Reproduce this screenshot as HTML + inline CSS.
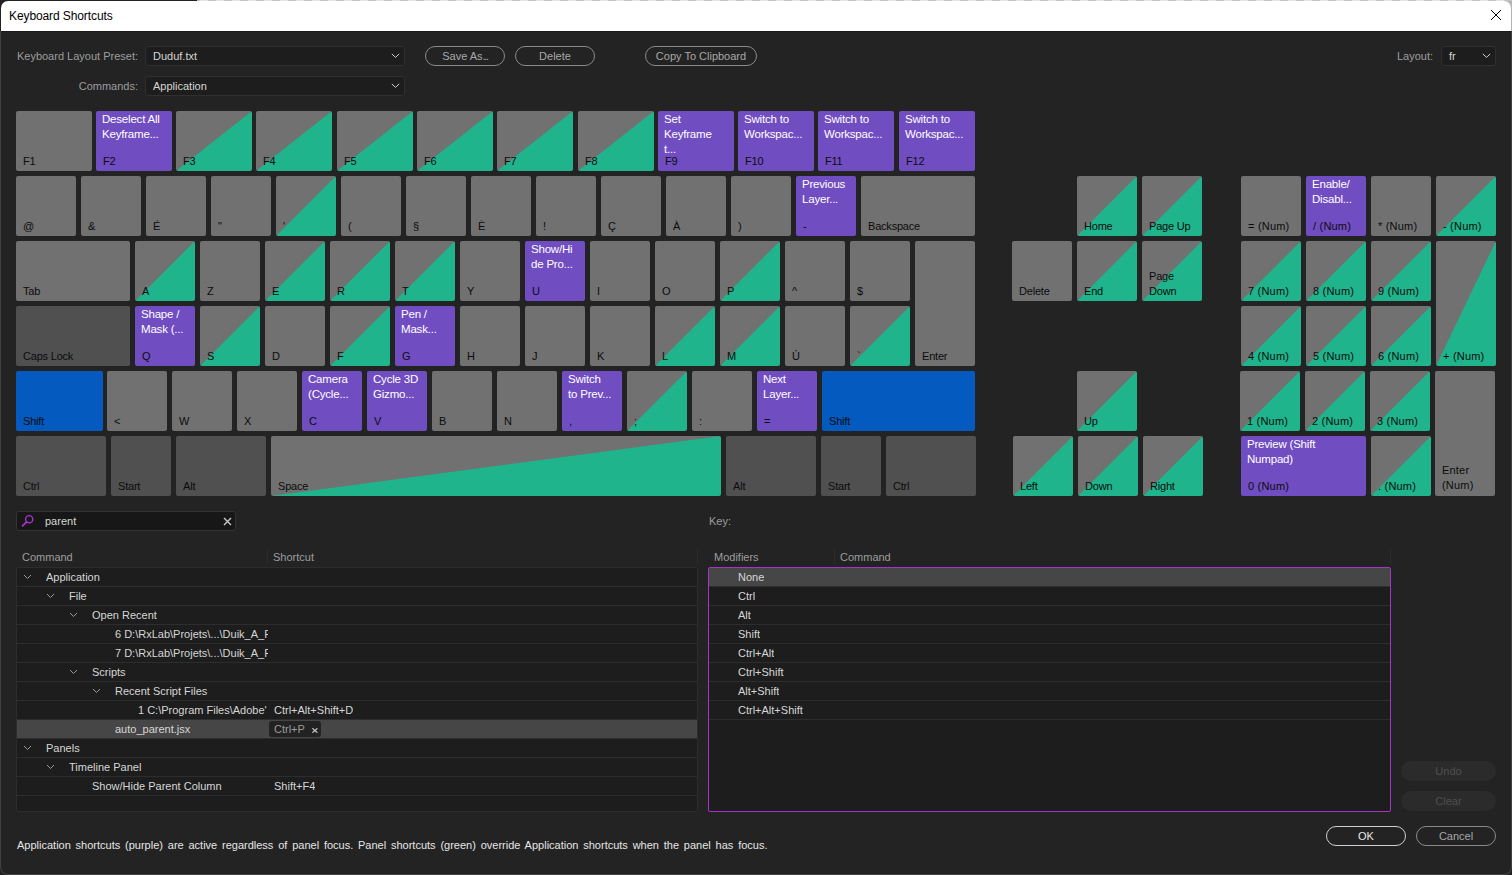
<!DOCTYPE html>
<html><head><meta charset="utf-8"><title>Keyboard Shortcuts</title>
<style>
*{box-sizing:border-box;margin:0;padding:0}
html,body{width:1512px;height:875px;overflow:hidden;background:#232323}
body{position:relative;font-family:"Liberation Sans",sans-serif;font-size:11px;letter-spacing:0;color:#d6d6d6;line-height:15px}
#win{position:absolute;left:0;top:0;width:1512px;height:875px;background:#232323;overflow:hidden}
#title{position:absolute;left:1px;top:1px;width:1510px;height:30px;background:#fff;border-radius:7px 7px 0 0;color:#000;letter-spacing:-0.1px;font-size:12px}
#title span{position:absolute;left:8px;top:8px;line-height:15px}
#edge-t{position:absolute;left:0;top:0;width:1512px;height:1px;background:linear-gradient(to right,#222 0,#222 197px,transparent 197px),repeating-linear-gradient(to right,#c4c4c4 0,#c4c4c4 8px,#e4e4e4 8px,#e4e4e4 16px)}
#frame{position:absolute;left:0;top:31px;width:1512px;height:844px;border:1px solid #414141;border-top:none;border-radius:0 0 8px 8px}
.lbl{position:absolute;color:#9d9d9d;white-space:nowrap}
.dd{position:absolute;height:20px;background:#1d1d1d;border:1px solid #303030;border-radius:3px;color:#d6d6d6}
.dd span{position:absolute;left:7px;top:2px;white-space:nowrap}
.dd svg{position:absolute;right:4px;top:6px}
.btn{position:absolute;height:20px;border:1px solid #8a8a8a;border-radius:10px;color:#a8a8a8;text-align:center;line-height:19px;white-space:nowrap}
.btn.dis{border:none;background:#2b2b2b;color:#4f4f4f;line-height:21px}
.btn.ok{border-color:#d0d0d0;color:#e8e8e8;border-width:1.5px;line-height:18px}
.k{position:absolute;border-radius:2px;background:#717171;overflow:hidden}
.k.p{background:#714dc2}
.k.b{background:#045abf}
.k.d{background:#505050}
.k.g{background:linear-gradient(to bottom right,#717171 49.6%,#1fb48b 50.4%)}
.k .l{position:absolute;left:7px;bottom:2px;color:#0c0c0c;white-space:nowrap;line-height:15px;font-size:11px;letter-spacing:-0.2px}
.k .l.n{letter-spacing:0.2px}
.k .c{position:absolute;left:6px;top:1px;color:#fff;white-space:nowrap;line-height:15px;font-size:11.5px;letter-spacing:-0.2px}
#search{position:absolute;left:16px;top:511px;width:220px;height:20px;background:#171717;border:1px solid #333;border-radius:3px}
#search span{position:absolute;left:28px;top:2px;color:#d6d6d6}
.tbl{position:absolute;background:#1d1d1d;overflow:hidden;border-radius:2px}
.row{position:absolute;left:0;width:100%;height:19px;border-bottom:1px solid #2d2d2d}
.row.sel{background:#464646}
.row span{position:absolute;top:2px;white-space:nowrap;overflow:hidden}
.row .nm{color:#d6d6d6}
.row .sc{left:257px;color:#d6d6d6}
.row .chv{top:0;height:19px;width:12px;overflow:visible}
.row .chv svg{position:absolute;left:0;top:6px}
.row .chip{left:252px;top:1px;width:52px;height:16px;background:#222;border-radius:3px;color:#9c9c9c;padding:1px 0 0 5px;overflow:visible}
.hdr{position:absolute;color:#9d9d9d;white-space:nowrap}
.vdiv{position:absolute;width:1px;background:#2c2c2c}
</style></head><body>
<div id="win">
<div style="position:absolute;left:1500px;top:1px;width:12px;height:30px;background:#b4b4b4"></div>
<div id="title"><span>Keyboard Shortcuts</span>
<svg width="12" height="12" viewBox="0 0 12 12" style="position:absolute;left:1489px;top:8px"><path d="M1 1L11 11M11 1L1 11" stroke="#000" stroke-width="1" fill="none"/></svg>
</div>
<div id="edge-t"></div>

<div class="lbl" style="right:1374px;top:49px">Keyboard Layout Preset:</div>
<div class="dd" style="left:145px;top:46px;width:260px"><span>Duduf.txt</span><svg width="9" height="6" viewBox="0 0 9 6"><path d="M0.8 0.9L4.5 4.4L8.2 0.9" fill="none" stroke="#cfcfcf" stroke-width="1"/></svg></div>
<div class="lbl" style="right:1374px;top:79px">Commands:</div>
<div class="dd" style="left:145px;top:76px;width:260px"><span>Application</span><svg width="9" height="6" viewBox="0 0 9 6"><path d="M0.8 0.9L4.5 4.4L8.2 0.9" fill="none" stroke="#cfcfcf" stroke-width="1"/></svg></div>
<div class="btn" style="left:425px;top:46px;width:80px">Save As<span style="letter-spacing:-1.3px">...</span></div>
<div class="btn" style="left:515px;top:46px;width:80px">Delete</div>
<div class="btn" style="left:645px;top:46px;width:112px">Copy To Clipboard</div>
<div class="lbl" style="left:1397px;top:49px">Layout:</div>
<div class="dd" style="left:1441px;top:46px;width:55px"><span>fr</span><svg width="9" height="6" viewBox="0 0 9 6"><path d="M0.8 0.9L4.5 4.4L8.2 0.9" fill="none" stroke="#cfcfcf" stroke-width="1"/></svg></div>

<div class="k " style="left:16px;top:111px;width:76px;height:60px"><span class="l">F1</span></div>
<div class="k p" style="left:96px;top:111px;width:76px;height:60px"><span class="c">Deselect All<br>Keyframe...</span><span class="l">F2</span></div>
<div class="k g" style="left:176px;top:111px;width:76px;height:60px"><span class="l">F3</span></div>
<div class="k g" style="left:256px;top:111px;width:76px;height:60px"><span class="l">F4</span></div>
<div class="k g" style="left:337px;top:111px;width:76px;height:60px"><span class="l">F5</span></div>
<div class="k g" style="left:417px;top:111px;width:76px;height:60px"><span class="l">F6</span></div>
<div class="k g" style="left:497px;top:111px;width:76px;height:60px"><span class="l">F7</span></div>
<div class="k g" style="left:578px;top:111px;width:76px;height:60px"><span class="l">F8</span></div>
<div class="k p" style="left:658px;top:111px;width:76px;height:60px"><span class="c">Set<br>Keyframe<br>t...</span><span class="l">F9</span></div>
<div class="k p" style="left:738px;top:111px;width:76px;height:60px"><span class="c">Switch to<br>Workspac...</span><span class="l">F10</span></div>
<div class="k p" style="left:818px;top:111px;width:76px;height:60px"><span class="c">Switch to<br>Workspac...</span><span class="l">F11</span></div>
<div class="k p" style="left:899px;top:111px;width:76px;height:60px"><span class="c">Switch to<br>Workspac...</span><span class="l">F12</span></div>
<div class="k " style="left:16px;top:176px;width:60px;height:60px"><span class="l">@</span></div>
<div class="k " style="left:81px;top:176px;width:60px;height:60px"><span class="l">&amp;</span></div>
<div class="k " style="left:146px;top:176px;width:60px;height:60px"><span class="l">É</span></div>
<div class="k " style="left:211px;top:176px;width:60px;height:60px"><span class="l">"</span></div>
<div class="k g" style="left:276px;top:176px;width:60px;height:60px"><span class="l">'</span></div>
<div class="k " style="left:341px;top:176px;width:60px;height:60px"><span class="l">(</span></div>
<div class="k " style="left:406px;top:176px;width:60px;height:60px"><span class="l">§</span></div>
<div class="k " style="left:471px;top:176px;width:60px;height:60px"><span class="l">È</span></div>
<div class="k " style="left:536px;top:176px;width:60px;height:60px"><span class="l">!</span></div>
<div class="k " style="left:601px;top:176px;width:60px;height:60px"><span class="l">Ç</span></div>
<div class="k " style="left:666px;top:176px;width:60px;height:60px"><span class="l">À</span></div>
<div class="k " style="left:731px;top:176px;width:60px;height:60px"><span class="l">)</span></div>
<div class="k p" style="left:796px;top:176px;width:60px;height:60px"><span class="c">Previous<br>Layer...</span><span class="l">-</span></div>
<div class="k " style="left:861px;top:176px;width:114px;height:60px"><span class="l">Backspace</span></div>
<div class="k " style="left:16px;top:241px;width:114px;height:60px"><span class="l">Tab</span></div>
<div class="k g" style="left:135px;top:241px;width:60px;height:60px"><span class="l">A</span></div>
<div class="k " style="left:200px;top:241px;width:60px;height:60px"><span class="l">Z</span></div>
<div class="k g" style="left:265px;top:241px;width:60px;height:60px"><span class="l">E</span></div>
<div class="k g" style="left:330px;top:241px;width:60px;height:60px"><span class="l">R</span></div>
<div class="k g" style="left:395px;top:241px;width:60px;height:60px"><span class="l">T</span></div>
<div class="k " style="left:460px;top:241px;width:60px;height:60px"><span class="l">Y</span></div>
<div class="k p" style="left:525px;top:241px;width:60px;height:60px"><span class="c">Show/Hi<br>de Pro...</span><span class="l">U</span></div>
<div class="k " style="left:590px;top:241px;width:60px;height:60px"><span class="l">I</span></div>
<div class="k " style="left:655px;top:241px;width:60px;height:60px"><span class="l">O</span></div>
<div class="k g" style="left:720px;top:241px;width:60px;height:60px"><span class="l">P</span></div>
<div class="k " style="left:785px;top:241px;width:60px;height:60px"><span class="l">^</span></div>
<div class="k " style="left:850px;top:241px;width:60px;height:60px"><span class="l">$</span></div>
<div class="k " style="left:915px;top:241px;width:60px;height:125px"><span class="l">Enter</span></div>
<div class="k d" style="left:16px;top:306px;width:114px;height:60px"><span class="l">Caps Lock</span></div>
<div class="k p" style="left:135px;top:306px;width:60px;height:60px"><span class="c">Shape /<br>Mask (...</span><span class="l">Q</span></div>
<div class="k g" style="left:200px;top:306px;width:60px;height:60px"><span class="l">S</span></div>
<div class="k " style="left:265px;top:306px;width:60px;height:60px"><span class="l">D</span></div>
<div class="k g" style="left:330px;top:306px;width:60px;height:60px"><span class="l">F</span></div>
<div class="k p" style="left:395px;top:306px;width:60px;height:60px"><span class="c">Pen /<br>Mask...</span><span class="l">G</span></div>
<div class="k " style="left:460px;top:306px;width:60px;height:60px"><span class="l">H</span></div>
<div class="k " style="left:525px;top:306px;width:60px;height:60px"><span class="l">J</span></div>
<div class="k " style="left:590px;top:306px;width:60px;height:60px"><span class="l">K</span></div>
<div class="k g" style="left:655px;top:306px;width:60px;height:60px"><span class="l">L</span></div>
<div class="k g" style="left:720px;top:306px;width:60px;height:60px"><span class="l">M</span></div>
<div class="k " style="left:785px;top:306px;width:60px;height:60px"><span class="l">Ù</span></div>
<div class="k g" style="left:850px;top:306px;width:60px;height:60px"><span class="l">`</span></div>
<div class="k b" style="left:16px;top:371px;width:87px;height:60px"><span class="l">Shift</span></div>
<div class="k " style="left:107px;top:371px;width:60px;height:60px"><span class="l">&lt;</span></div>
<div class="k " style="left:172px;top:371px;width:60px;height:60px"><span class="l">W</span></div>
<div class="k " style="left:237px;top:371px;width:60px;height:60px"><span class="l">X</span></div>
<div class="k p" style="left:302px;top:371px;width:60px;height:60px"><span class="c">Camera<br>(Cycle...</span><span class="l">C</span></div>
<div class="k p" style="left:367px;top:371px;width:60px;height:60px"><span class="c">Cycle 3D<br>Gizmo...</span><span class="l">V</span></div>
<div class="k " style="left:432px;top:371px;width:60px;height:60px"><span class="l">B</span></div>
<div class="k " style="left:497px;top:371px;width:60px;height:60px"><span class="l">N</span></div>
<div class="k p" style="left:562px;top:371px;width:60px;height:60px"><span class="c">Switch<br>to Prev...</span><span class="l">,</span></div>
<div class="k g" style="left:627px;top:371px;width:60px;height:60px"><span class="l">;</span></div>
<div class="k " style="left:692px;top:371px;width:60px;height:60px"><span class="l">:</span></div>
<div class="k p" style="left:757px;top:371px;width:60px;height:60px"><span class="c">Next<br>Layer...</span><span class="l">=</span></div>
<div class="k b" style="left:822px;top:371px;width:153px;height:60px"><span class="l">Shift</span></div>
<div class="k d" style="left:16px;top:436px;width:90px;height:60px"><span class="l">Ctrl</span></div>
<div class="k d" style="left:111px;top:436px;width:60px;height:60px"><span class="l">Start</span></div>
<div class="k d" style="left:176px;top:436px;width:90px;height:60px"><span class="l">Alt</span></div>
<div class="k g" style="left:271px;top:436px;width:450px;height:60px"><span class="l">Space</span></div>
<div class="k d" style="left:726px;top:436px;width:90px;height:60px"><span class="l">Alt</span></div>
<div class="k d" style="left:821px;top:436px;width:60px;height:60px"><span class="l">Start</span></div>
<div class="k d" style="left:886px;top:436px;width:90px;height:60px"><span class="l">Ctrl</span></div>
<div class="k g" style="left:1077px;top:176px;width:60px;height:60px"><span class="l">Home</span></div>
<div class="k g" style="left:1142px;top:176px;width:60px;height:60px"><span class="l">Page Up</span></div>
<div class="k " style="left:1012px;top:241px;width:60px;height:60px"><span class="l">Delete</span></div>
<div class="k g" style="left:1077px;top:241px;width:60px;height:60px"><span class="l">End</span></div>
<div class="k g" style="left:1142px;top:241px;width:60px;height:60px"><span class="l">Page<br>Down</span></div>
<div class="k g" style="left:1077px;top:371px;width:60px;height:60px"><span class="l">Up</span></div>
<div class="k g" style="left:1013px;top:436px;width:60px;height:60px"><span class="l">Left</span></div>
<div class="k g" style="left:1078px;top:436px;width:60px;height:60px"><span class="l">Down</span></div>
<div class="k g" style="left:1143px;top:436px;width:60px;height:60px"><span class="l">Right</span></div>
<div class="k " style="left:1241px;top:176px;width:60px;height:60px"><span class="l n">= (Num)</span></div>
<div class="k p" style="left:1306px;top:176px;width:60px;height:60px"><span class="c">Enable/<br>Disabl...</span><span class="l n">/ (Num)</span></div>
<div class="k " style="left:1371px;top:176px;width:60px;height:60px"><span class="l n">* (Num)</span></div>
<div class="k g" style="left:1436px;top:176px;width:60px;height:60px"><span class="l n">- (Num)</span></div>
<div class="k g" style="left:1241px;top:241px;width:60px;height:60px"><span class="l n">7 (Num)</span></div>
<div class="k g" style="left:1306px;top:241px;width:60px;height:60px"><span class="l n">8 (Num)</span></div>
<div class="k g" style="left:1371px;top:241px;width:60px;height:60px"><span class="l n">9 (Num)</span></div>
<div class="k g" style="left:1436px;top:241px;width:60px;height:125px"><span class="l n">+ (Num)</span></div>
<div class="k g" style="left:1241px;top:306px;width:60px;height:60px"><span class="l n">4 (Num)</span></div>
<div class="k g" style="left:1306px;top:306px;width:60px;height:60px"><span class="l n">5 (Num)</span></div>
<div class="k g" style="left:1371px;top:306px;width:60px;height:60px"><span class="l n">6 (Num)</span></div>
<div class="k g" style="left:1240px;top:371px;width:60px;height:60px"><span class="l n">1 (Num)</span></div>
<div class="k g" style="left:1305px;top:371px;width:60px;height:60px"><span class="l n">2 (Num)</span></div>
<div class="k g" style="left:1370px;top:371px;width:60px;height:60px"><span class="l n">3 (Num)</span></div>
<div class="k " style="left:1435px;top:371px;width:60px;height:125px"><span class="l n" style="bottom:3px">Enter<br>(Num)</span></div>
<div class="k p" style="left:1241px;top:436px;width:125px;height:60px"><span class="c">Preview (Shift<br>Numpad)</span><span class="l n">0 (Num)</span></div>
<div class="k g" style="left:1371px;top:436px;width:60px;height:60px"><span class="l n">. (Num)</span></div>

<div id="search"><svg width="14" height="14" viewBox="0 0 14 14" style="position:absolute;left:4px;top:2px"><circle cx="8.2" cy="5.2" r="3.6" fill="none" stroke="#a935cd" stroke-width="1.4"/><path d="M5.6 7.8L1.5 11.9" stroke="#a935cd" stroke-width="1.7" stroke-linecap="round"/></svg><span>parent</span>
<svg width="9" height="9" viewBox="0 0 9 9" style="position:absolute;left:206px;top:5px"><path d="M1 1L8 8M8 1L1 8" stroke="#c8c8c8" stroke-width="1.4" fill="none"/></svg></div>

<div class="lbl" style="left:709px;top:514px">Key:</div>

<div class="hdr" style="left:22px;top:550px">Command</div>
<div class="hdr" style="left:273px;top:550px">Shortcut</div>
<div class="vdiv" style="left:267px;top:549px;height:15px"></div>
<div class="tbl" id="lt" style="left:16px;top:567px;width:682px;height:245px;border:1px solid #2d2d2d">
<div style="position:absolute;left:0;top:0;width:100%;height:100%">
<div class="row" style="top:0px"><span class="chv" style="left:6px"><svg class="chev" width="9" height="6" viewBox="0 0 9 6"><path d="M1 1 L4.5 4.5 L8 1" fill="none" stroke="#999" stroke-width="1"/></svg></span><span class="nm" style="left:29px;width:222px">Application</span></div>
<div class="row" style="top:19px"><span class="chv" style="left:29px"><svg class="chev" width="9" height="6" viewBox="0 0 9 6"><path d="M1 1 L4.5 4.5 L8 1" fill="none" stroke="#999" stroke-width="1"/></svg></span><span class="nm" style="left:52px;width:199px">File</span></div>
<div class="row" style="top:38px"><span class="chv" style="left:52px"><svg class="chev" width="9" height="6" viewBox="0 0 9 6"><path d="M1 1 L4.5 4.5 L8 1" fill="none" stroke="#999" stroke-width="1"/></svg></span><span class="nm" style="left:75px;width:176px">Open Recent</span></div>
<div class="row" style="top:57px"><span class="nm" style="left:98px;width:153px">6 D:\RxLab\Projets\...\Duik_A_F</span></div>
<div class="row" style="top:76px"><span class="nm" style="left:98px;width:153px">7 D:\RxLab\Projets\...\Duik_A_F</span></div>
<div class="row" style="top:95px"><span class="chv" style="left:52px"><svg class="chev" width="9" height="6" viewBox="0 0 9 6"><path d="M1 1 L4.5 4.5 L8 1" fill="none" stroke="#999" stroke-width="1"/></svg></span><span class="nm" style="left:75px;width:176px">Scripts</span></div>
<div class="row" style="top:114px"><span class="chv" style="left:75px"><svg class="chev" width="9" height="6" viewBox="0 0 9 6"><path d="M1 1 L4.5 4.5 L8 1" fill="none" stroke="#999" stroke-width="1"/></svg></span><span class="nm" style="left:98px;width:153px">Recent Script Files</span></div>
<div class="row" style="top:133px"><span class="nm" style="left:121px;width:130px">1 C:\Program Files\Adobe'</span><span class="sc">Ctrl+Alt+Shift+D</span></div>
<div class="row sel" style="top:152px"><span class="nm" style="left:98px;width:153px">auto_parent.jsx</span><span class="chip">Ctrl+P<svg width="6" height="5" viewBox="0 0 6 5" style="position:absolute;left:43px;top:7px"><path d="M0.4 0.3L5.4 4.7M5.4 0.3L0.4 4.7" stroke="#c8c8c8" stroke-width="1.2" fill="none"/></svg></span></div>
<div class="row" style="top:171px"><span class="chv" style="left:6px"><svg class="chev" width="9" height="6" viewBox="0 0 9 6"><path d="M1 1 L4.5 4.5 L8 1" fill="none" stroke="#999" stroke-width="1"/></svg></span><span class="nm" style="left:29px;width:222px">Panels</span></div>
<div class="row" style="top:190px"><span class="chv" style="left:29px"><svg class="chev" width="9" height="6" viewBox="0 0 9 6"><path d="M1 1 L4.5 4.5 L8 1" fill="none" stroke="#999" stroke-width="1"/></svg></span><span class="nm" style="left:52px;width:199px">Timeline Panel</span></div>
<div class="row" style="top:209px"><span class="nm" style="left:75px;width:176px">Show/Hide Parent Column</span><span class="sc">Shift+F4</span></div>
</div></div>

<div class="hdr" style="left:714px;top:550px">Modifiers</div>
<div class="hdr" style="left:840px;top:550px">Command</div>
<div class="vdiv" style="left:697px;top:549px;height:15px"></div>
<div class="vdiv" style="left:834px;top:549px;height:15px"></div>
<div class="vdiv" style="left:1390px;top:549px;height:15px"></div>
<div class="tbl" id="rt" style="left:708px;top:567px;width:683px;height:245px;border:1px solid #a535c9">
<div style="position:absolute;left:0;top:0;width:100%;height:100%">
<div class="row sel" style="top:0px"><span class="nm" style="left:29px">None</span></div>
<div class="row" style="top:19px"><span class="nm" style="left:29px">Ctrl</span></div>
<div class="row" style="top:38px"><span class="nm" style="left:29px">Alt</span></div>
<div class="row" style="top:57px"><span class="nm" style="left:29px">Shift</span></div>
<div class="row" style="top:76px"><span class="nm" style="left:29px">Ctrl+Alt</span></div>
<div class="row" style="top:95px"><span class="nm" style="left:29px">Ctrl+Shift</span></div>
<div class="row" style="top:114px"><span class="nm" style="left:29px">Alt+Shift</span></div>
<div class="row" style="top:133px"><span class="nm" style="left:29px">Ctrl+Alt+Shift</span></div>
</div></div>

<div class="btn dis" style="left:1401px;top:761px;width:95px">Undo</div>
<div class="btn dis" style="left:1401px;top:791px;width:95px">Clear</div>
<div class="btn ok" style="left:1326px;top:826px;width:80px">OK</div>
<div class="btn" style="left:1416px;top:826px;width:80px">Cancel</div>

<div style="position:absolute;left:17px;top:838px;color:#e6e6e6;white-space:nowrap;word-spacing:1.75px">Application shortcuts (purple) are active regardless of panel focus. Panel shortcuts (green) override Application shortcuts when the panel has focus.</div>
<div style="position:absolute;left:1px;top:31px;width:1510px;height:1px;background:#1a1a1a"></div>
<div id="frame"></div>
</div>
</body></html>
